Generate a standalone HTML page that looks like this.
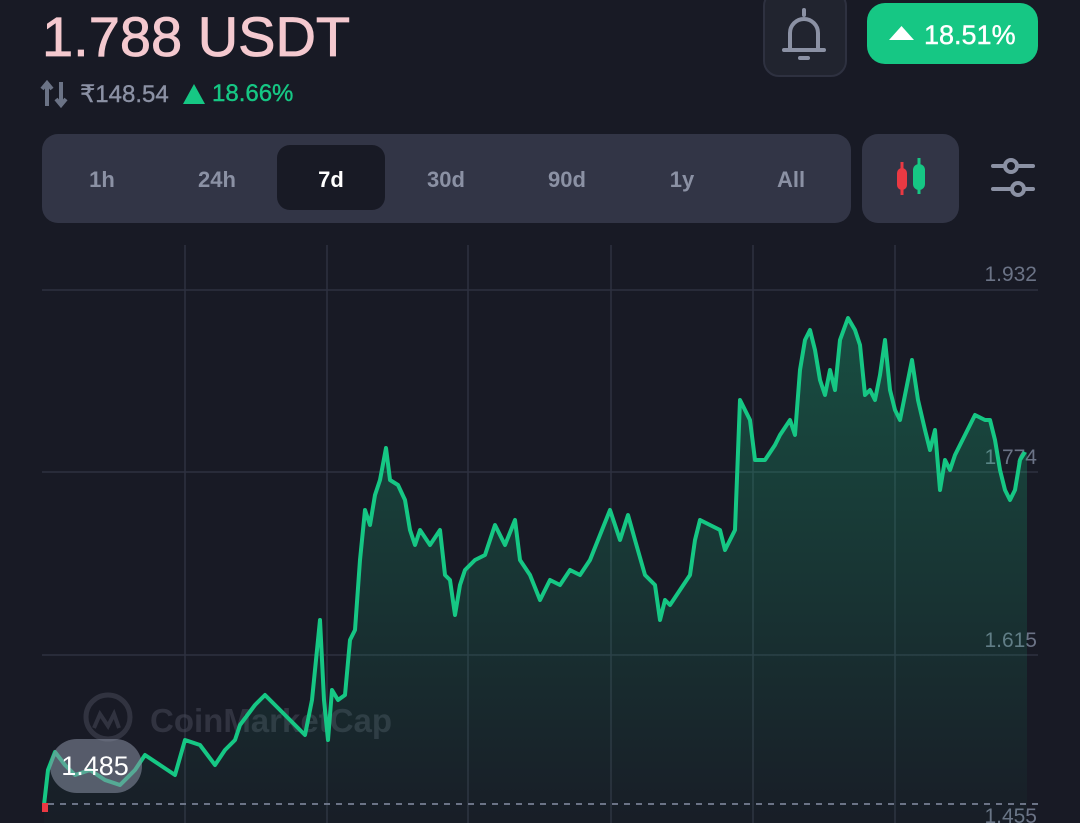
<!DOCTYPE html>
<html><head><style>
body{margin:0;width:1080px;height:823px;background:#181a25;font-family:"Liberation Sans",sans-serif;overflow:hidden;position:relative}
.a{position:absolute}
.tab{position:absolute;top:167px;font-size:22px;color:#8b91a4;text-align:center;width:80px;font-weight:bold}
</style></head><body>
<div class="a" style="left:42px;top:4px;font-size:56px;color:#f4c9cf;-webkit-text-stroke:0.8px #f4c9cf">1.788 USDT</div>
<svg class="a" style="left:40px;top:80px" width="32" height="28" viewBox="0 0 32 28"><path d="M7 26V4M2 9l5-6 5 6" stroke="#6b7386" stroke-width="4" fill="none"/><path d="M21 2v22M16 19l5 6 5-6" stroke="#6b7386" stroke-width="4" fill="none"/></svg>
<div class="a" style="left:80px;top:80px;font-size:24px;color:#8b91a4;-webkit-text-stroke:0.4px #8b91a4">₹148.54</div>
<svg class="a" style="left:183px;top:84px" width="22" height="20"><path d="M11 0L22 20H0z" fill="#16c784"/></svg>
<div class="a" style="left:212px;top:80px;font-size:24px;color:#16c784;-webkit-text-stroke:0.4px #16c784">18.66%</div>
<div class="a" style="left:763px;top:-10px;width:80px;height:83px;border:2px solid #2e3140;border-radius:16px;background:#21242f"></div>
<svg class="a" style="left:778px;top:6px" width="52" height="56" viewBox="0 0 52 56"><path d="M26 4v5M12 42V27a14 14 0 0 1 28 0v15M6 44h40" stroke="#8b91a4" stroke-width="4" fill="none" stroke-linecap="round" stroke-linejoin="round"/><path d="M22 52h8" stroke="#8b91a4" stroke-width="4" stroke-linecap="round"/></svg>
<div class="a" style="left:867px;top:3px;width:171px;height:61px;background:#16c784;border-radius:18px"></div>
<svg class="a" style="left:889px;top:26px" width="25" height="14"><path d="M12.5 0L25 14H0z" fill="#fff"/></svg>
<div class="a" style="left:924px;top:20px;font-size:27px;color:#fff;-webkit-text-stroke:0.4px #fff">18.51%</div>
<div class="a" style="left:42px;top:134px;width:809px;height:89px;background:#323546;border-radius:16px"></div>
<div class="a" style="left:277px;top:145px;width:108px;height:65px;background:#181a25;border-radius:13px"></div>
<div class="tab" style="left:62px">1h</div>
<div class="tab" style="left:177px">24h</div>
<div class="tab" style="left:291px;color:#fff">7d</div>
<div class="tab" style="left:406px">30d</div>
<div class="tab" style="left:527px">90d</div>
<div class="tab" style="left:642px">1y</div>
<div class="tab" style="left:751px">All</div>
<div class="a" style="left:862px;top:134px;width:97px;height:89px;background:#323546;border-radius:16px"></div>
<svg class="a" style="left:895px;top:156px" width="40" height="45"><path d="M7 6v33" stroke="#ea3943" stroke-width="3"/><rect x="2" y="12" width="10" height="22" rx="5" fill="#ea3943"/><path d="M24 2v36" stroke="#16c784" stroke-width="3"/><rect x="18" y="8" width="12" height="26" rx="6" fill="#16c784"/></svg>
<svg class="a" style="left:990px;top:157px" width="50" height="44"><g stroke="#8b91a4" stroke-width="4" fill="none" stroke-linecap="round"><circle cx="21" cy="9" r="6"/><path d="M3 9h12M27 9h16"/><circle cx="28" cy="32" r="6"/><path d="M3 32h19M34 32h9"/></g></svg>
<svg class="a" style="left:0;top:0" width="1080" height="823">
<defs><linearGradient id="g" x1="0" y1="0" x2="0" y2="1"><stop offset="0" stop-color="#16c784" stop-opacity="0.3"/><stop offset="1" stop-color="#16c784" stop-opacity="0.02"/></linearGradient></defs>
<g stroke="#2e3140" stroke-width="1.5"><path d="M185 245V823M327 245V823M468 245V823M611 245V823M753 245V823M895 245V823"/><path d="M42 290H1038M42 472H1038M42 655H1038"/></g>
<g font-size="21" fill="#6b7386" text-anchor="end"><text x="1037" y="281">1.932</text><text x="1037" y="464">1.774</text><text x="1037" y="647">1.615</text><text x="1037" y="823">1.455</text></g>
<g opacity="0.5" fill="#4a4d5c"><circle cx="108" cy="717" r="22" fill="none" stroke="#4a4d5c" stroke-width="5"/><path d="M94 728l6-14 8 12 6-12 5 14" stroke="#4a4d5c" stroke-width="4" fill="none"/><text x="150" y="732" font-size="33" font-weight="bold">CoinMarketCap</text></g>
<path d="M44 805L48 770L55 752L65 765L75 775L90 770L105 780L120 785L135 770L145 755L160 765L175 775L185 740L200 745L215 765L225 750L235 740L240 725L255 705L265 695L275 705L285 715L295 725L305 735L312 700L316 660L320 620L324 700L328 740L332 690L338 700L345 695L350 640L355 630L360 560L365 510L370 525L375 495L380 480L386 448L390 480L398 485L405 500L410 530L415 545L420 530L430 545L440 530L445 575L450 580L455 615L460 585L465 570L475 560L485 555L495 525L505 545L515 520L520 560L530 575L540 600L550 580L560 585L570 570L580 575L590 560L600 535L610 510L620 540L628 515L635 540L645 575L655 585L660 620L665 600L670 605L680 590L690 575L695 540L700 520L710 525L720 530L725 550L735 530L740 400L745 410L750 420L755 460L765 460L775 445L780 435L790 420L795 435L800 370L805 340L810 330L815 350L820 380L825 395L830 370L835 390L840 340L848 318L855 330L860 345L865 395L870 390L875 400L880 375L885 340L890 390L895 410L900 420L905 395L912 360L918 400L925 430L930 450L935 430L940 490L945 460L950 470L955 455L965 435L975 415L985 420L990 420L995 440L1000 470L1005 490L1010 500L1015 490L1020 460L1025 452L1027 452L1027 823L44 823Z" fill="url(#g)"/>
<path d="M44 805L48 770L55 752L65 765L75 775L90 770L105 780L120 785L135 770L145 755L160 765L175 775L185 740L200 745L215 765L225 750L235 740L240 725L255 705L265 695L275 705L285 715L295 725L305 735L312 700L316 660L320 620L324 700L328 740L332 690L338 700L345 695L350 640L355 630L360 560L365 510L370 525L375 495L380 480L386 448L390 480L398 485L405 500L410 530L415 545L420 530L430 545L440 530L445 575L450 580L455 615L460 585L465 570L475 560L485 555L495 525L505 545L515 520L520 560L530 575L540 600L550 580L560 585L570 570L580 575L590 560L600 535L610 510L620 540L628 515L635 540L645 575L655 585L660 620L665 600L670 605L680 590L690 575L695 540L700 520L710 525L720 530L725 550L735 530L740 400L745 410L750 420L755 460L765 460L775 445L780 435L790 420L795 435L800 370L805 340L810 330L815 350L820 380L825 395L830 370L835 390L840 340L848 318L855 330L860 345L865 395L870 390L875 400L880 375L885 340L890 390L895 410L900 420L905 395L912 360L918 400L925 430L930 450L935 430L940 490L945 460L950 470L955 455L965 435L975 415L985 420L990 420L995 440L1000 470L1005 490L1010 500L1015 490L1020 460L1025 452" fill="none" stroke="#16c784" stroke-width="4" stroke-linejoin="round"/>
<path d="M48 804H1038" stroke="#6b7386" stroke-width="2" stroke-dasharray="6 6"/>
<rect x="42" y="803" width="6" height="9" fill="#ea3943"/>
<rect x="50" y="739" width="92" height="54" rx="27" fill="#8b91a4" opacity="0.55"/>
<text x="95" y="775" font-size="27" fill="#fff" text-anchor="middle">1.485</text>
</svg>
</body></html>
